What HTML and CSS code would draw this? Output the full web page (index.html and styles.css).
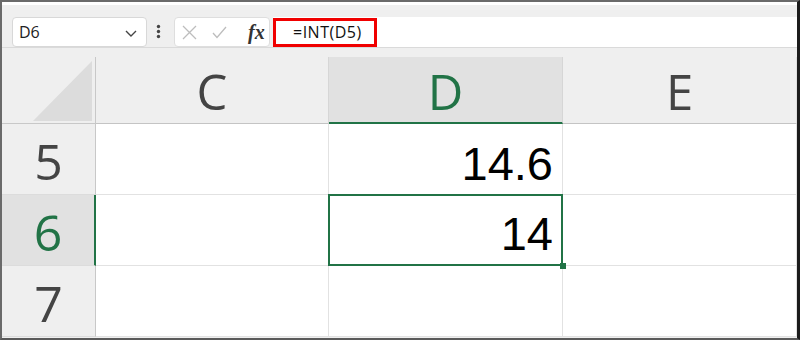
FILE: index.html
```html
<!DOCTYPE html>
<html>
<head>
<meta charset="utf-8">
<link rel="stylesheet" href="styles.css">
</head>
<body>
<div class="frame">
  <div class="topstrip"></div>
  <div class="toolbar">
    <div class="namebox">
      <span class="ref">D6</span>
      <svg class="chev" width="12" height="7" viewBox="0 0 12 7"><path d="M1 1 L6 6 L11 1" fill="none" stroke="#444" stroke-width="1.4"/></svg>
    </div>
    <svg class="dots" width="5" height="16" viewBox="0 0 5 16"><circle cx="2.5" cy="2.5" r="1.7" fill="#444"/><circle cx="2.5" cy="7.5" r="1.7" fill="#444"/><circle cx="2.5" cy="12.5" r="1.7" fill="#444"/></svg>
    <div class="fxbox">
      <svg class="xicon" width="15" height="15" viewBox="0 0 15 15"><path d="M1 1 L14 14 M14 1 L1 14" stroke="#bdbdbd" stroke-width="1.3" fill="none"/></svg>
      <svg class="check" width="15" height="13" viewBox="0 0 15 13"><path d="M1 7 L5 11.5 L14 1" stroke="#bdbdbd" stroke-width="1.3" fill="none"/></svg>
      <span class="fx">fx</span>
    </div>
    <div class="formula">
      <span class="formula-text">=INT(D5)</span>
    </div>
  </div>
  <div class="sheet">
    <div class="grid">
      <div class="corner"><svg width="59" height="60" viewBox="0 0 59 60"><polygon points="59,0 59,60 0,60" fill="#dcdcdc"/></svg></div>
      <div class="colhead">C</div>
      <div class="colhead active">D</div>
      <div class="colhead last">E</div>

      <div class="rowhead">5</div>
      <div class="cell"></div>
      <div class="cell num">14.6</div>
      <div class="cell last"></div>

      <div class="rowhead active">6</div>
      <div class="cell"></div>
      <div class="cell num sel">14<span class="handle"></span></div>
      <div class="cell last"></div>

      <div class="rowhead">7</div>
      <div class="cell"></div>
      <div class="cell"></div>
      <div class="cell last"></div>
    </div>
  </div>
</div>
</body>
</html>
```

FILE: styles.css
```css
html, body {
  margin: 0;
  padding: 0;
  background: #ffffff;
}

.frame {
  width: 800px;
  height: 340px;
  box-sizing: border-box;
  border-top: 2px solid #6a6a6a;
  border-left: 2px solid #6a6a6a;
  border-bottom: 2px solid #5a5a5a;
  border-right: 3px solid #1c1c1c;
  background: #efefef;
  overflow: hidden;
  display: flex;
  flex-direction: column;
  font-family: "Open Sans", "Noto Sans", sans-serif;
}

.topstrip {
  height: 3px;
  background: #ffffff;
  flex: none;
}

.toolbar {
  flex: none;
  height: 43px;
  box-sizing: border-box;
  border-bottom: 1px solid #dadada;
  display: flex;
  align-items: flex-end;
  padding-left: 10px;
}

.namebox {
  width: 135px;
  height: 30px;
  box-sizing: border-box;
  background: #ffffff;
  border: 1px solid #d8d8d8;
  border-radius: 4px;
  display: flex;
  align-items: center;
  justify-content: space-between;
  padding: 0 9px 0 6px;
}

.ref {
  font-size: 16px;
  color: #222;
  line-height: 1;
}

.chev {
  margin-top: 2px;
}

.dots {
  margin: 0 0 7px 9px;
}

.fxbox {
  margin-left: 13px;
  width: 96px;
  height: 30px;
  box-sizing: border-box;
  background: #ffffff;
  border: 1px solid #dedede;
  border-radius: 4px;
  display: flex;
  align-items: center;
  padding-left: 7px;
}

.check {
  margin-left: 15px;
}

.fx {
  margin-left: 21px;
  font-family: "Liberation Serif", serif;
  font-style: italic;
  font-weight: bold;
  font-size: 20px;
  color: #333;
  line-height: 1;
}

.formula {
  margin-left: 3px;
  flex: 1;
  height: 30px;
  background: #ffffff;
  display: flex;
  align-items: flex-end;
}

.formula-text {
  width: 104px;
  height: 29px;
  box-sizing: border-box;
  border: 3px solid #f00000;
  padding-left: 17px;
  font-size: 16px;
  letter-spacing: 0.5px;
  color: #111;
  line-height: 22px;
}

.sheet {
  flex: 1;
  padding-top: 9px;
}

.grid {
  display: grid;
  grid-template-columns: 94px 233px 234px 1fr;
  grid-template-rows: 67px 71px 71px 71px;
}

.corner {
  background: #efefef;
  border-right: 1px solid #c8c8c8;
  border-bottom: 1px solid #c8c8c8;
  display: flex;
  justify-content: flex-end;
  align-items: flex-end;
  padding: 0 3px 2px 0;
}

.colhead {
  background: #efefef;
  border-right: 1px solid #d6d6d6;
  border-bottom: 1px solid #c4c4c4;
  display: flex;
  justify-content: center;
  align-items: center;
  padding-top: 3px;
  box-sizing: border-box;
  font-size: 49px;
  line-height: 1;
  color: #444;
}

.colhead.last {
  border-right: 1px solid #e0e0e0;
}

.colhead.active {
  background: #e1e1e1;
  color: #217346;
  border-bottom: 2px solid #217346;
}

.rowhead {
  background: #efefef;
  border-right: 1px solid #c8c8c8;
  border-bottom: 1px solid #dcdcdc;
  display: flex;
  justify-content: center;
  align-items: center;
  padding-top: 3px;
  box-sizing: border-box;
  font-size: 50px;
  line-height: 1;
  color: #444;
}

.rowhead.active {
  background: #e1e1e1;
  color: #217346;
  border-right: 2px solid #217346;
}

.cell {
  background: #ffffff;
  border-right: 1px solid #e2e2e2;
  border-bottom: 1px solid #e2e2e2;
  box-sizing: border-box;
}

.num {
  display: flex;
  justify-content: flex-end;
  align-items: flex-end;
  padding: 0 9px 7px 0;
  font-family: "Liberation Sans", Arial, sans-serif;
  font-size: 47px;
  line-height: 1;
  color: #000;
}

.sel {
  position: relative;
  padding-bottom: 8px;
}

.sel::before {
  content: "";
  position: absolute;
  left: -1px;
  top: -1px;
  right: -1px;
  bottom: -1px;
  border: 2px solid #217346;
}

.handle {
  position: absolute;
  right: -4px;
  bottom: -4px;
  width: 6px;
  height: 6px;
  background: #217346;
}
```
